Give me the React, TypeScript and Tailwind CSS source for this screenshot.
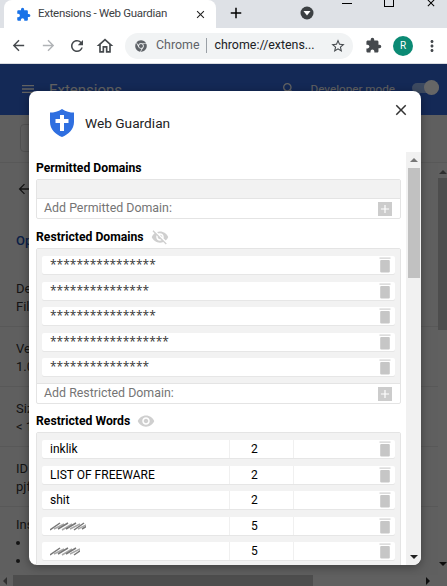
import { FaChrome } from 'react-icons/fa'
import {
  MdAdd,
  MdArrowBack,
  MdArrowForward,
  MdClose,
  MdExtension,
  MdMenu,
  MdMoreVert,
  MdOutlineHome,
  MdRefresh,
  MdSearch,
  MdStarBorder,
  MdVisibility,
  MdVisibilityOff
} from 'react-icons/md'

const domains = [
  '****************',
  '***************',
  '****************',
  '******************',
  '***************'
]

const words = [
  { text: 'inklik', count: 2 },
  { text: 'LIST OF FREEWARE', count: 2 },
  { text: 'shit', count: 2 },
  { smudge: 36, count: 5 },
  { smudge: 30, count: 5 },
  { smudge: 30, count: 5 }
]

const details = [
  { label: 'Description', value: 'Filters' },
  { label: 'Version', value: '1.0' },
  { label: 'Size', value: '< 1 MB' },
  { label: 'ID', value: 'pjfkl' }
]

function Trash() {
  return (
    <svg
      width="12"
      height="16"
      viewBox="0 0 12 16"
      className="shrink-0">
      <rect x="0.500" y="0.500" width="11" height="1.200" fill="#cfcfcf" />
      <rect x="1.200" y="3" width="9.600" height="12.500" rx="1" fill="#c6c6c6" />
    </svg>
  )
}

function Smudge({ width }: { width: number }) {
  return (
    <svg
      width={width}
      height="14"
      viewBox={`0 0 ${width} 14`}
      className="blur-[0.6px]">
      {Array.from({ length: Math.floor(width / 4) }).map((_, i) => (
        <line
          key={i}
          x1={i * 4}
          y1={i % 3 ? 10 : 11}
          x2={i * 4 + 10}
          y2={i % 2 ? 5 : 4}
          stroke={i % 2 ? '#a8a8a8' : '#777777'}
          strokeWidth="1.500"
        />
      ))}
    </svg>
  )
}

function AddRow({ label }: { label: string }) {
  return (
    <div className="flex h-[19px] items-center justify-between pr-[8px] pl-[7px] text-[12.400px] text-[#757575]">
      <span>{label}</span>
      <span className="flex h-[14px] w-[14px] items-center justify-center bg-[#cccccc] text-white">
        <MdAdd size={14} />
      </span>
    </div>
  )
}

function SectionTitle({ children, icon }: { children: string; icon?: React.ReactNode }) {
  return (
    <div className="flex h-[18px] items-center gap-[7px] text-[12.200px] font-bold text-black">
      <span>{children}</span>
      {icon}
    </div>
  )
}

function Modal() {
  return (
    <div className="absolute top-[91px] left-[29px] flex h-[474px] w-[392px] flex-col overflow-hidden rounded-[8px] bg-white shadow-[0_2px_10px_rgba(0,0,0,0.35)]">
      <div className="flex h-[61px] shrink-0 items-start justify-between pt-[18px] pr-[11px] pl-[21px]">
        <div className="flex items-center gap-[11px]">
          <svg width="24" height="28" viewBox="0 0 24 28">
            <path
              d="M12 0 C16 2.600 20 3.600 24 3.600 V13 C24 20 18.500 25.500 12 28 C5.500 25.500 0 20 0 13 V3.600 C4 3.600 8 2.600 12 0 Z"
              fill="#2f6fe0"
            />
            <path d="M10 6 H14 V10 H18.500 V14 H14 V22 H10 V14 H5.500 V10 H10 Z" fill="#ffffff" />
          </svg>
          <span className="text-[13.700px] text-[#222222]">Web Guardian</span>
        </div>
        <MdClose size={18} className="-mt-[8px] text-[#333333]" />
      </div>
      <div className="flex min-h-0 flex-1">
        <div className="w-[377px] overflow-hidden pt-[7px] pr-[5px] pl-[7px]">
          <SectionTitle>Permitted Domains</SectionTitle>
          <div className="mt-[2px] rounded-[2px] border border-[#e4e4e4]">
            <div className="h-[19px] border-b border-[#e4e4e4] bg-[#f2f2f2]" />
            <AddRow label="Add Permitted Domain:" />
          </div>
          <div className="mt-[9px]">
            <SectionTitle icon={<MdVisibilityOff size={18} className="text-[#cfcfcf]" />}>
              Restricted Domains
            </SectionTitle>
          </div>
          <div className="mt-[2px] rounded-[2px] border border-[#e4e4e4]">
            <div className="flex flex-col gap-[7.500px] border-b border-[#e4e4e4] bg-[#f2f2f2] px-[5px] pt-[7px] pb-[7px]">
              {domains.map((d, i) => (
                <div
                  key={i}
                  className="flex h-[18px] items-center justify-between rounded-[2px] bg-white pr-[4px] pl-[8px] font-['Open_Sans',sans-serif] text-[12px] text-[#333333] shadow-[0_1px_0_#e6e6e6]">
                  <span>{d}</span>
                  <Trash />
                </div>
              ))}
            </div>
            <AddRow label="Add Restricted Domain:" />
          </div>
          <div className="mt-[8px]">
            <SectionTitle icon={<MdVisibility size={18} className="text-[#cfcfcf]" />}>
              Restricted Words
            </SectionTitle>
          </div>
          <div className="mt-[2px] rounded-[2px] border border-[#e4e4e4]">
            <div className="flex flex-col gap-[7.500px] bg-[#f2f2f2] px-[5px] pt-[7px] pb-[6px]">
              {words.map((w, i) => (
                <div
                  key={i}
                  className="flex h-[18px] items-center rounded-[2px] bg-white text-[12px] text-black shadow-[0_1px_0_#e6e6e6]">
                  <div className="flex w-[187px] items-center pl-[8px]">
                    {w.text ?? <Smudge width={w.smudge ?? 30} />}
                  </div>
                  <div className="flex h-full w-[65px] items-center border-x border-[#f0f0f0] pl-[21px]">
                    {w.count}
                  </div>
                  <div className="flex flex-1 justify-end pr-[4px]">
                    <Trash />
                  </div>
                </div>
              ))}
            </div>
          </div>
        </div>
        <div className="flex w-[15px] flex-col items-center bg-[#f1f1f1]">
          <div className="flex h-[16px] items-center justify-center">
            <div className="h-0 w-0 border-x-[4px] border-b-[4px] border-x-transparent border-b-[#777777]" />
          </div>
          <div className="h-[110px] w-[12px] bg-[#c1c1c1]" />
          <div className="mt-auto flex h-[16px] items-center justify-center">
            <div className="h-0 w-0 border-x-[4px] border-t-[4px] border-x-transparent border-t-[#222222]" />
          </div>
        </div>
      </div>
    </div>
  )
}

function BackgroundPage() {
  return (
    <div className="flex min-h-0 flex-1 flex-col bg-[#eeeeee]">
      <div className="flex h-[51px] shrink-0 items-start bg-[#3367d6] pt-[17px] pr-[8px] pl-[20px] text-[#f4f4f4]">
        <MdMenu size={16} />
        <span className="ml-[13px] text-[15px] leading-[18px]">Extensions</span>
        <MdSearch size={16} className="ml-auto" />
        <span className="ml-[14px] text-[11.700px]">Developer mode</span>
        <div className="relative mt-[2px] ml-[17px] h-[10px] w-[27px] rounded-full bg-[#9ab8f0]">
          <div className="absolute -top-[3px] right-0 h-[15px] w-[15px] rounded-full bg-white" />
        </div>
      </div>
      <div className="h-[48px] shrink-0 border-b border-[#dddddd] pt-[9px] pl-[20px]">
        <div className="h-[28px] w-[40px] rounded-[4px] border border-[#cccccc]" />
      </div>
      <div className="flex min-h-0 flex-1">
        <div className="min-w-0 flex-1 overflow-hidden text-[13px] text-[#333333]">
          <div className="h-[104px] pt-[18px] pl-[16px]">
            <MdArrowBack size={16} />
            <div className="mt-[34px] font-medium text-[#1a4fb0]">Open</div>
          </div>
          {details.map((d) => (
            <div
              key={d.label}
              className="h-[60px] border-b border-[#dddddd] pt-[13px] pl-[16px] leading-[18px]">
              {d.label}
              <br />
              {d.value}
            </div>
          ))}
          <div className="pt-[9px] pl-[16px] leading-[18px]">
            Installed
            <ul className="list-inside list-disc">
              <li>Block</li>
              <li>Filter</li>
            </ul>
          </div>
        </div>
        <div className="flex w-[9px] shrink-0 flex-col items-center bg-[#f1f1f1]">
          <div className="mt-[7px] h-0 w-0 border-x-[4px] border-b-[4px] border-x-transparent border-b-[#777777]" />
          <div className="mt-[4px] h-[152px] w-full bg-[#c1c1c1]" />
          <div className="mt-auto mb-[9px] h-0 w-0 border-x-[4px] border-t-[4px] border-x-transparent border-t-[#222222]" />
        </div>
      </div>
      <div className="flex h-[11px] shrink-0 items-center bg-[#f1f1f1] pr-[17px] pl-[3px]">
        <div className="h-0 w-0 border-y-[4px] border-r-[4px] border-y-transparent border-r-[#777777]" />
        <div className="ml-[6px] h-full w-[300px] bg-[#c1c1c1]" />
        <div className="ml-auto h-0 w-0 border-y-[4px] border-l-[4px] border-y-transparent border-l-[#222222]" />
      </div>
    </div>
  )
}

export default function App() {
  return (
    <div className="relative flex h-[586px] w-[447px] flex-col overflow-hidden bg-white font-['Roboto',sans-serif]">
      <div className="flex h-[28px] shrink-0 items-start bg-[#dee1e6]">
        <div className="ml-[4px] flex h-[28px] w-[212px] items-center rounded-t-[8px] bg-white pr-[9px] pl-[12px] text-[11.500px] tracking-[-0.3px] text-[#3c4043]">
          <MdExtension size={15} className="text-[#1a73e8]" />
          <span className="ml-[7px]">Extensions - Web Guardian</span>
          <MdClose size={13} className="ml-auto text-[#222222]" />
        </div>
        <MdAdd size={18} className="mt-[4px] ml-[11px] text-black" />
        <svg width="14" height="14" viewBox="0 0 14 14" className="mt-[6px] ml-[55px]">
          <circle cx="7" cy="7" r="6.500" fill="#3c4043" />
          <path d="M3.500 5 H10.500 L7 9.500 Z" fill="#ffffff" />
        </svg>
        <div className="ml-[28px] h-[1px] w-[10px] translate-y-[3px] bg-black" />
        <div className="ml-[32px] h-[7px] w-[10px] border border-t-0 border-black" />
        <MdClose size={12} className="ml-[31px] -translate-y-[3px] text-black" />
      </div>
      <div className="flex h-[36px] shrink-0 items-center border-b border-[#dadce0] bg-white pr-[2px] pl-[10px] text-[#45494d]">
        <MdArrowBack size={17} />
        <MdArrowForward size={17} className="ml-[13px] text-[#b0b3b6]" />
        <MdRefresh size={18} className="ml-[11px]" />
        <MdOutlineHome size={20} className="ml-[9px]" />
        <div className="ml-[10px] flex h-[26px] w-[228px] items-center rounded-full bg-[#f1f3f4] pr-[7px] pl-[10px] text-[12.400px]">
          <FaChrome size={12} className="text-[#5f6368]" />
          <span className="ml-[9px] text-[#5f6368]">Chrome</span>
          <span className="mx-[7px] h-[15px] w-[1px] bg-[#9aa0a6]" />
          <span className="text-[#202124]">chrome://extens...</span>
          <MdStarBorder size={16} className="ml-auto" />
        </div>
        <MdExtension size={17} className="ml-[12px]" />
        <div className="ml-[11px] flex h-[20px] w-[20px] items-center justify-center rounded-full bg-[#0b8a74] text-[10px] text-white">
          R
        </div>
        <MdMoreVert size={18} className="ml-[10px]" />
      </div>
      <BackgroundPage />
      <div className="absolute inset-x-0 top-[64px] bottom-0 bg-black/60" />
      <Modal />
    </div>
  )
}
